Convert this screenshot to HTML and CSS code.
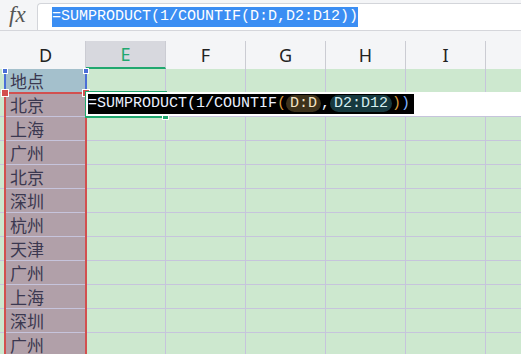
FILE: index.html
```html
<!DOCTYPE html>
<html lang="zh-CN">
<head>
    <meta charset="UTF-8">
    <meta name="viewport" content="width=device-width, initial-scale=1.0">
    <title>SUMPRODUCT</title>
    <link rel="stylesheet" href="styles.css">
</head>
<body>
    <!-- 编辑栏 -->
    <div class="toolbar">
        <span class="fx">fx</span>
        <div class="formula"><span class="sel">=SUMPRODUCT(1/COUNTIF(D:D,D2:D12))</span></div>
    </div>

    <!-- 列标 -->
    <div class="headers">
        <div class="hcell col-c"></div>
        <div class="hcell">D</div>
        <div class="hcell active">E</div>
        <div class="hcell">F</div>
        <div class="hcell">G</div>
        <div class="hcell">H</div>
        <div class="hcell">I</div>
        <div class="hcell rest"></div>
    </div>

    <!-- 表格 -->
    <div class="sheet">
        <div class="row">
            <div class="cell col-c"></div>
            <div class="cell col-d head">地点</div>
            <div class="cell"></div><div class="cell"></div><div class="cell"></div>
            <div class="cell"></div><div class="cell"></div><div class="cell rest"></div>
        </div>
        <div class="row">
            <div class="cell col-c"></div>
            <div class="cell col-d">北京</div>
            <div class="cell"></div><div class="cell"></div><div class="cell"></div>
            <div class="cell"></div><div class="cell"></div><div class="cell rest"></div>
        </div>
        <div class="row">
            <div class="cell col-c"></div>
            <div class="cell col-d">上海</div>
            <div class="cell"></div><div class="cell"></div><div class="cell"></div>
            <div class="cell"></div><div class="cell"></div><div class="cell rest"></div>
        </div>
        <div class="row">
            <div class="cell col-c"></div>
            <div class="cell col-d">广州</div>
            <div class="cell"></div><div class="cell"></div><div class="cell"></div>
            <div class="cell"></div><div class="cell"></div><div class="cell rest"></div>
        </div>
        <div class="row">
            <div class="cell col-c"></div>
            <div class="cell col-d">北京</div>
            <div class="cell"></div><div class="cell"></div><div class="cell"></div>
            <div class="cell"></div><div class="cell"></div><div class="cell rest"></div>
        </div>
        <div class="row">
            <div class="cell col-c"></div>
            <div class="cell col-d">深圳</div>
            <div class="cell"></div><div class="cell"></div><div class="cell"></div>
            <div class="cell"></div><div class="cell"></div><div class="cell rest"></div>
        </div>
        <div class="row">
            <div class="cell col-c"></div>
            <div class="cell col-d">杭州</div>
            <div class="cell"></div><div class="cell"></div><div class="cell"></div>
            <div class="cell"></div><div class="cell"></div><div class="cell rest"></div>
        </div>
        <div class="row">
            <div class="cell col-c"></div>
            <div class="cell col-d">天津</div>
            <div class="cell"></div><div class="cell"></div><div class="cell"></div>
            <div class="cell"></div><div class="cell"></div><div class="cell rest"></div>
        </div>
        <div class="row">
            <div class="cell col-c"></div>
            <div class="cell col-d">广州</div>
            <div class="cell"></div><div class="cell"></div><div class="cell"></div>
            <div class="cell"></div><div class="cell"></div><div class="cell rest"></div>
        </div>
        <div class="row">
            <div class="cell col-c"></div>
            <div class="cell col-d">上海</div>
            <div class="cell"></div><div class="cell"></div><div class="cell"></div>
            <div class="cell"></div><div class="cell"></div><div class="cell rest"></div>
        </div>
        <div class="row">
            <div class="cell col-c"></div>
            <div class="cell col-d">深圳</div>
            <div class="cell"></div><div class="cell"></div><div class="cell"></div>
            <div class="cell"></div><div class="cell"></div><div class="cell rest"></div>
        </div>
        <div class="row">
            <div class="cell col-c"></div>
            <div class="cell col-d">广州</div>
            <div class="cell"></div><div class="cell"></div><div class="cell"></div>
            <div class="cell"></div><div class="cell"></div><div class="cell rest"></div>
        </div>

        <!-- 引用区域和活动单元格 -->
        <div class="range-blue">
            <span class="knob-blue left"></span>
            <span class="knob-blue right"></span>
        </div>
        <div class="range-red">
            <span class="knob-red left"></span>
            <span class="knob-red right"></span>
        </div>
        <div class="active-cell"><span class="fill-handle"></span></div>

        <!-- 单元格内编辑 -->
        <div class="editor"><span class="edit-sel">=SUMPRODUCT(1/COUNTIF<span class="p1">(</span><span class="ref ref-a">D:D</span>,<span class="ref ref-b">D2:D12</span><span class="p1">)</span><span class="p2">)</span></span><span class="caret"></span></div>
    </div>
</body>
</html>
```

FILE: styles.css
```css
body {
    margin: 0;
    width: 521px;
    height: 354px;
    overflow: hidden;
    background-color: #f4f5f7;
    font-family: 'Noto Sans', 'Noto Sans CJK SC', sans-serif;
}
.toolbar {
    display: flex;
    height: 30px;
    border-bottom: 1px solid #d5d6db;
}
.fx {
    width: 37px;
    padding-left: 9px;
    box-sizing: border-box;
    font-family: 'Liberation Serif', serif;
    font-style: italic;
    font-size: 23px;
    line-height: 30px;
    color: #555;
}
.formula {
    flex: 1;
    display: flex;
    align-items: center;
    margin-top: 3px;
    padding-left: 14px;
    background: #fff;
    border: 1px solid #d3d5da;
    border-right: none;
    border-bottom: none;
    border-radius: 4px 0 0 0;
}
.sel {
    background-color: #3b8ef3;
    color: #fff;
    font-family: 'Liberation Mono', monospace;
    font-size: 15px;
    line-height: 20px;
}
.headers {
    display: flex;
    height: 28px;
    margin-top: 10px;
}
.hcell {
    width: 80px;
    box-sizing: border-box;
    border-right: 1px solid #cbccd3;
    text-align: center;
    font-size: 18px;
    line-height: 28px;
    color: #222;
}
.hcell.col-c {
    width: 6px;
    border-right: none;
}
.hcell.rest {
    flex: 1;
    border-right: none;
}
.hcell.active {
    background-color: #d7d8de;
    border-bottom: 2px solid #20a86f;
    color: #1fa870;
    line-height: 26px;
}
.sheet {
    position: relative;
    background-color: #cde8cf;
}
.row {
    display: flex;
    height: 24px;
}
.cell {
    width: 80px;
    box-sizing: border-box;
    border-right: 1px solid #c6c4dc;
    border-bottom: 1px solid #c6c4dc;
}
.cell.col-c {
    width: 6px;
    border-right: none;
}
.cell.rest {
    flex: 1;
    border-right: none;
}
.cell.col-d {
    background-color: #b1a0a9;
    padding-left: 4px;
    font-family: 'Noto Sans CJK SC', sans-serif;
    font-size: 17px;
    line-height: 23px;
    color: #3b3850;
}
.cell.col-d.head {
    background-color: #a4c0cc;
}
.range-blue {
    position: absolute;
    left: 4px;
    top: 0;
    width: 83px;
    height: 23px;
    box-sizing: border-box;
    border-left: 2px solid #4a6fd6;
    border-right: 2px solid #4a6fd6;
}
.knob-blue {
    position: absolute;
    top: -1px;
    width: 4px;
    height: 4px;
    background: #4a6fd6;
    border: 1px solid #fff;
}
.knob-blue.left { left: -4px; }
.knob-blue.right { right: -4px; }
.range-red {
    position: absolute;
    left: 4px;
    top: 23px;
    width: 83px;
    height: 300px;
    box-sizing: border-box;
    border: 2px solid #d2504f;
}
.knob-red {
    position: absolute;
    top: -5px;
    width: 6px;
    height: 6px;
    background: #d2504f;
    border: 1px solid #fff;
}
.knob-red.left { left: -5px; }
.knob-red.right { right: -5px; }
.active-cell {
    position: absolute;
    left: 85px;
    top: 22px;
    width: 82px;
    height: 27px;
    box-sizing: border-box;
    border: 2px solid #20a86f;
}
.fill-handle {
    position: absolute;
    right: -4px;
    bottom: -4px;
    width: 5px;
    height: 5px;
    background: #20a86f;
    border: 1px solid #fff;
}
.editor {
    position: absolute;
    left: 86px;
    right: 0;
    top: 23px;
    height: 24px;
    box-sizing: border-box;
    padding: 2px 0 2px 2px;
    display: flex;
    background: #fff;
    font-family: 'Liberation Mono', monospace;
    font-size: 15px;
    line-height: 20px;
}
.edit-sel {
    background: #000;
    color: #eaf1ff;
    padding-right: 3px;
}
.ref {
    padding: 0 4px;
    border-radius: 9px;
}
.ref-a {
    background: #3d321c;
    color: #f3e4c4;
}
.ref-b {
    background: #17393f;
    color: #d4eef0;
}
.p1 { color: #d69a3c; }
.p2 { color: #7fb2ff; }
.caret {
    width: 1px;
    background: #000;
}
```
